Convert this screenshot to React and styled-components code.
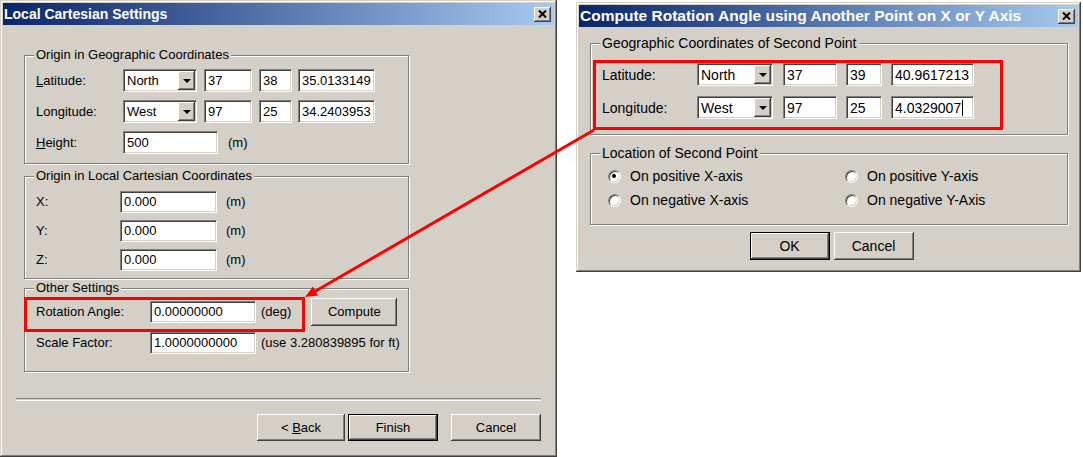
import styled, { createGlobalStyle, css } from "styled-components";

const GlobalStyle = createGlobalStyle`
  html, body {
    margin: 0;
    padding: 0;
    background: #fff;
  }
  body {
    font-family: "Liberation Sans", Arial, sans-serif;
    font-size: 13px;
    line-height: 16px;
    color: #000;
  }
`;

const raised = css`
  box-shadow: inset -1px -1px #404040, inset 1px 1px #fff,
    inset -2px -2px #808080, inset 2px 2px #d4d0c8;
`;

const sunken = css`
  border: 1px solid;
  border-color: #808080 #fff #fff #808080;
  box-shadow: inset 1px 1px #404040, inset -1px -1px #d4d0c8;
`;

const Stage = styled.div`
  position: relative;
  display: flex;
  align-items: flex-start;
  width: 1083px;
  height: 457px;
  overflow: hidden;
  background: #fff;
`;

const Window = styled.div`
  box-sizing: border-box;
  display: flex;
  flex-direction: column;
  flex: none;
  width: ${(p) => p.$w}px;
  height: ${(p) => p.$h}px;
  margin: ${(p) => p.$m || 0};
  padding: 3px;
  background: #d4d0c8;
  font-size: ${(p) => p.$fs || 13}px;
  box-shadow: inset -1px -1px #404040, inset 1px 1px #d4d0c8,
    inset -2px -2px #808080, inset 2px 2px #fff;
`;

const TitleBar = styled.div`
  display: flex;
  align-items: center;
  justify-content: space-between;
  flex: none;
  height: 22px;
  padding: 0 3px 0 1px;
  background: linear-gradient(to right, #0a246a, #a6caf0);
  color: #fff;
  font-weight: bold;
  font-size: ${(p) => p.$fs || 14}px;
  white-space: nowrap;
`;

const CloseBox = styled.div`
  display: flex;
  align-items: center;
  justify-content: center;
  width: 17px;
  height: 15px;
  background: #d4d0c8;
  ${raised}
`;

const Content = styled.div`
  display: flex;
  flex-direction: column;
  padding-left: ${(p) => p.$pl}px;
`;

const Group = styled.fieldset`
  box-sizing: border-box;
  width: ${(p) => p.$w}px;
  min-width: 0;
  margin: ${(p) => p.$mt}px 0 0 0;
  padding: ${(p) => p.$pad};
  border: 1px solid #808080;
  box-shadow: inset 1px 1px #fff, 1px 1px #fff;
`;

const Legend = styled.legend`
  margin-left: -2px;
  padding: 0 2px;
  line-height: 16px;
  background: #d4d0c8;
`;

const Rows = styled.div`
  display: flex;
  flex-direction: column;
  gap: ${(p) => p.$gap}px;
`;

const Row = styled.div`
  display: flex;
  align-items: center;
  height: ${(p) => p.$h}px;
  white-space: nowrap;
`;

const Label = styled.span`
  flex: none;
  width: ${(p) => p.$w}px;
`;

const Unit = styled.span`
  margin-left: ${(p) => p.$ml}px;
`;

const Field = styled.div`
  box-sizing: border-box;
  display: flex;
  align-items: center;
  flex: none;
  width: ${(p) => p.$w}px;
  height: ${(p) => p.$h || 23}px;
  margin-right: ${(p) => p.$mr || 0}px;
  padding: 0 3px;
  background: #fff;
  white-space: nowrap;
  ${sunken}
`;

const Caret = styled.span`
  display: inline-block;
  width: 1px;
  height: 16px;
  margin-left: 1px;
  background: #000;
`;

const Combo = styled(Field)`
  justify-content: space-between;
  padding: 1px 1px 1px 3px;
`;

const DropButton = styled.div`
  display: flex;
  align-items: center;
  justify-content: center;
  width: 17px;
  height: 100%;
  background: #d4d0c8;
  ${raised}

  &::after {
    content: "";
    border-left: 4px solid transparent;
    border-right: 4px solid transparent;
    border-top: 4px solid #000;
  }
`;

const Button = styled.button`
  box-sizing: border-box;
  flex: none;
  width: ${(p) => p.$w}px;
  height: ${(p) => p.$h}px;
  margin-left: ${(p) => p.$ml || 0}px;
  padding: 0;
  border: none;
  background: #d4d0c8;
  font: inherit;
  color: #000;
  ${raised}
  ${(p) =>
    p.$default &&
    css`
      border: 1px solid #000;
    `}
`;

const Separator = styled.div`
  height: 1px;
  margin: 26px 13px 0;
  border-top: 1px solid #808080;
  border-bottom: 1px solid #fff;
`;

const Footer = styled.div`
  display: flex;
  justify-content: ${(p) => p.$justify || "flex-end"};
  margin-top: ${(p) => p.$mt}px;
  padding: ${(p) => p.$pad || 0};
`;

const RadioGrid = styled.div`
  display: grid;
  grid-template-columns: 237px auto;
  row-gap: 8px;
  padding-left: 6px;
`;

const RadioItem = styled.div`
  display: flex;
  align-items: center;
  height: 16px;
  white-space: nowrap;
`;

const RadioDot = styled.span`
  box-sizing: border-box;
  position: relative;
  flex: none;
  width: 13px;
  height: 13px;
  margin-right: 9px;
  border-radius: 50%;
  background: #fff;
  ${sunken}

  ${(p) =>
    p.$checked &&
    css`
      &::after {
        content: "";
        position: absolute;
        left: 3px;
        top: 3px;
        width: 4px;
        height: 4px;
        border-radius: 50%;
        background: #000;
      }
    `}
`;

const Overlay = styled.svg`
  position: absolute;
  left: 0;
  top: 0;
  pointer-events: none;
`;

const CloseIcon = () => (
  <svg width="9" height="8" viewBox="0 0 9 8">
    <path d="M1 0.5 L8 7.5 M8 0.5 L1 7.5" stroke="#000" strokeWidth="2" />
  </svg>
);

const Combobox = ({ value, w, mr }) => (
  <Combo $w={w} $mr={mr}>
    {value}
    <DropButton />
  </Combo>
);

const LocalCartesian = () => (
  <Window $w={557} $h={457}>
    <TitleBar>
      Local Cartesian Settings
      <CloseBox>
        <CloseIcon />
      </CloseBox>
    </TitleBar>
    <Content $pl={21}>
      <Group $w={385} $mt={22} $pad="6px 0 9px 11px">
        <Legend>Origin in Geographic Coordinates</Legend>
        <Rows $gap={8}>
          <Row $h={23}>
            <Label $w={87}>
              <u>L</u>atitude:
            </Label>
            <Combobox value="North" w={74} mr={7} />
            <Field $w={48} $mr={7}>37</Field>
            <Field $w={33} $mr={6}>38</Field>
            <Field $w={77}>35.0133149</Field>
          </Row>
          <Row $h={23}>
            <Label $w={87}>Longitude:</Label>
            <Combobox value="West" w={74} mr={7} />
            <Field $w={48} $mr={7}>97</Field>
            <Field $w={33} $mr={6}>25</Field>
            <Field $w={77}>34.2403953</Field>
          </Row>
          <Row $h={23}>
            <Label $w={87}>
              <u>H</u>eight:
            </Label>
            <Field $w={95}>500</Field>
            <Unit $ml={10}>(m)</Unit>
          </Row>
        </Rows>
      </Group>

      <Group $w={385} $mt={4} $pad="7px 0 7px 11px">
        <Legend>Origin in Local Cartesian Coordinates</Legend>
        <Rows $gap={7}>
          {["X:", "Y:", "Z:"].map((axis) => (
            <Row $h={22} key={axis}>
              <Label $w={84}>{axis}</Label>
              <Field $w={97} $h={22}>0.000</Field>
              <Unit $ml={9}>(m)</Unit>
            </Row>
          ))}
        </Rows>
      </Group>

      <Group $w={385} $mt={1} $pad="2px 0 17px 11px">
        <Legend>Other Settings</Legend>
        <Rows $gap={6}>
          <Row $h={28}>
            <Label $w={114}>Rotation Angle:</Label>
            <Field $w={106} $h={22}>0.00000000</Field>
            <Unit $ml={5}>(deg)</Unit>
            <Button $w={86} $h={28} $ml={20}>Compute</Button>
          </Row>
          <Row $h={22}>
            <Label $w={114}>Scale Factor:</Label>
            <Field $w={106} $h={22}>1.0000000000</Field>
            <Unit $ml={5}>(use 3.280839895 for ft)</Unit>
          </Row>
        </Rows>
      </Group>
    </Content>
    <Separator />
    <Footer $mt={13} $pad="0 13px 0 0">
      <Button $w={88} $h={27}>
        &lt; <u>B</u>ack
      </Button>
      <Button $w={90} $h={27} $ml={3} $default>
        Finish
      </Button>
      <Button $w={90} $h={27} $ml={13}>
        Cancel
      </Button>
    </Footer>
  </Window>
);

const ComputeRotation = () => (
  <Window $w={505} $h={270} $m="2px 0 0 19px" $fs={14}>
    <TitleBar $fs={15.5}>
      Compute Rotation Angle using Another Point on X or Y Axis
      <CloseBox>
        <CloseIcon />
      </CloseBox>
    </TitleBar>
    <Content $pl={11}>
      <Group $w={478} $mt={8} $pad="12px 0 15px 11px">
        <Legend>Geographic Coordinates of Second Point</Legend>
        <Rows $gap={10}>
          <Row $h={23}>
            <Label $w={95}>Latitude:</Label>
            <Combobox value="North" w={76} mr={10} />
            <Field $w={54} $mr={9}>37</Field>
            <Field $w={36} $mr={9}>39</Field>
            <Field $w={83}>40.9617213</Field>
          </Row>
          <Row $h={23}>
            <Label $w={95}>Longitude:</Label>
            <Combobox value="West" w={76} mr={10} />
            <Field $w={54} $mr={9}>97</Field>
            <Field $w={36} $mr={9}>25</Field>
            <Field $w={83}>
              4.0329007
              <Caret />
            </Field>
          </Row>
        </Rows>
      </Group>

      <Group $w={478} $mt={10} $pad="7px 0 16px 11px">
        <Legend>Location of Second Point</Legend>
        <RadioGrid>
          <RadioItem>
            <RadioDot $checked />
            On positive X-axis
          </RadioItem>
          <RadioItem>
            <RadioDot />
            On positive Y-axis
          </RadioItem>
          <RadioItem>
            <RadioDot />
            On negative X-axis
          </RadioItem>
          <RadioItem>
            <RadioDot />
            On negative Y-Axis
          </RadioItem>
        </RadioGrid>
      </Group>
    </Content>
    <Footer $mt={7} $justify="center" $pad="0 0 0 6px">
      <Button $w={80} $h={28} $default>
        OK
      </Button>
      <Button $w={80} $h={28} $ml={4}>
        Cancel
      </Button>
    </Footer>
  </Window>
);

const Annotations = () => (
  <Overlay width="1083" height="457" viewBox="0 0 1083 457">
    <g fill="none" stroke="#f00" strokeWidth="3">
      <rect x="25.5" y="298.5" width="278" height="32" />
      <rect x="594.5" y="61.5" width="407" height="67" />
      <line x1="594" y1="130" x2="314" y2="292" />
    </g>
    <polygon points="305,297 318,295.5 313,286.5" fill="#f00" />
  </Overlay>
);

export default function App() {
  return (
    <>
      <GlobalStyle />
      <Stage>
        <LocalCartesian />
        <ComputeRotation />
        <Annotations />
      </Stage>
    </>
  );
}
